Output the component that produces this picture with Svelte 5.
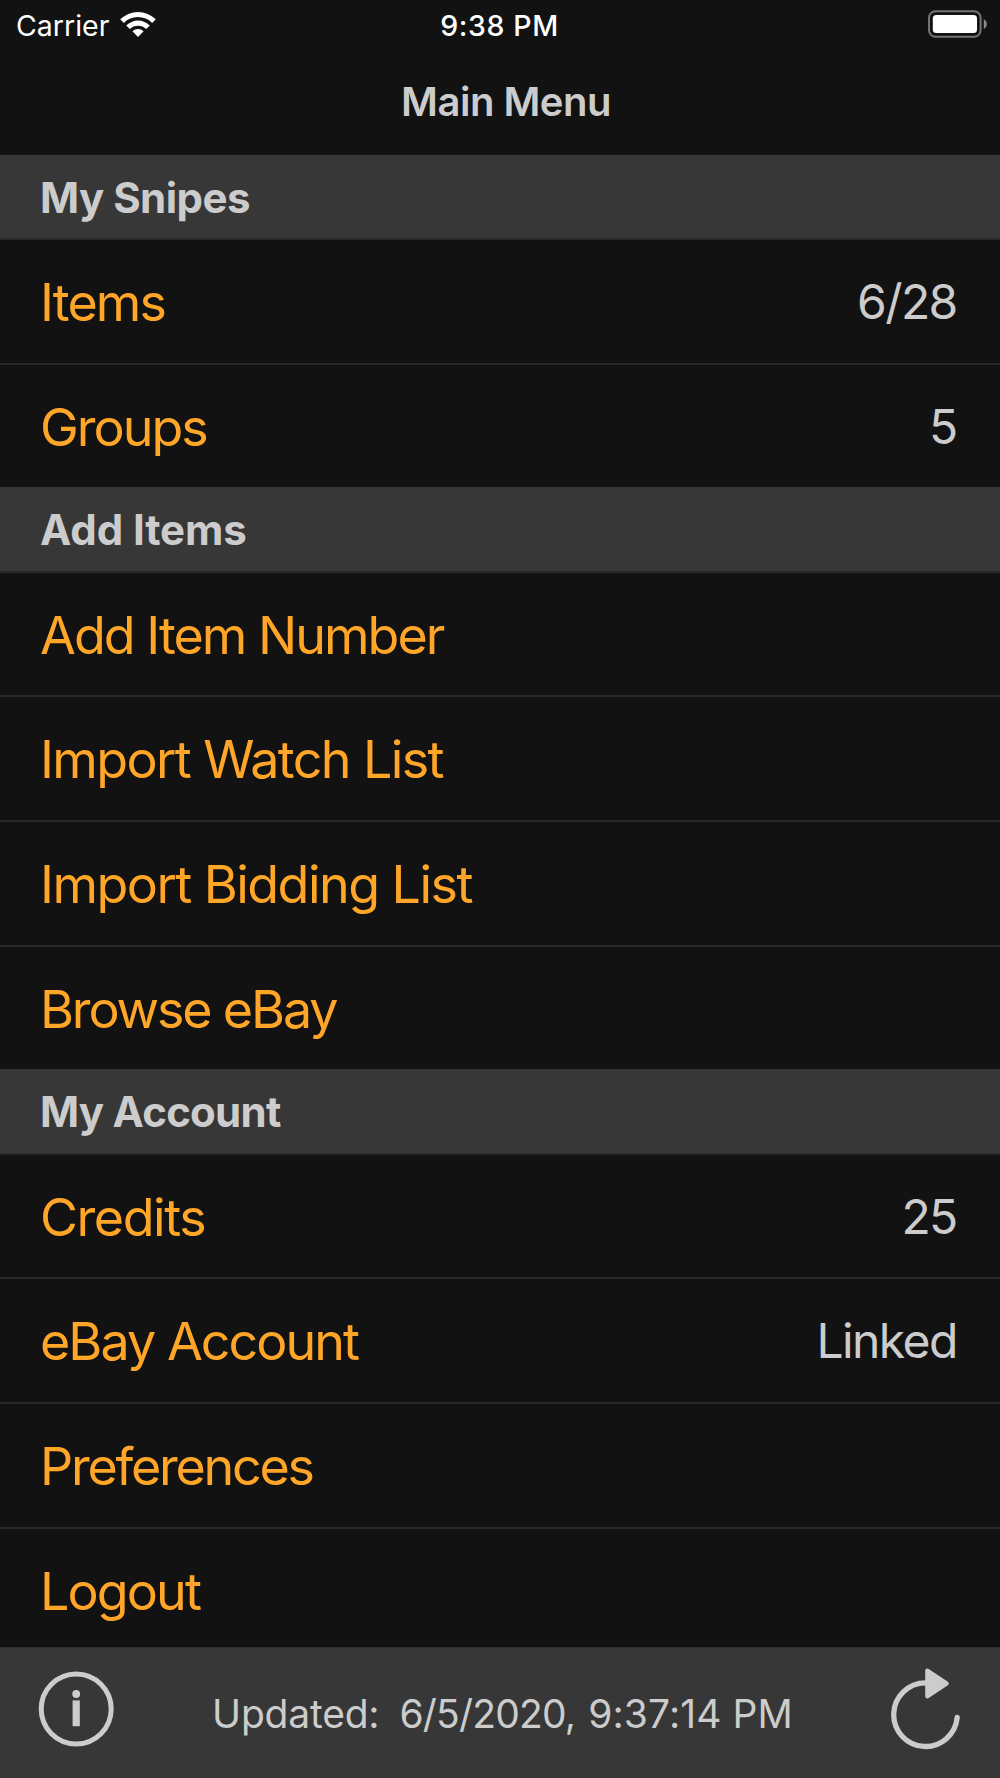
<script>
  // `tracking` is the letter spacing of a text, in pixels.
  const sections = [
    {
      title: 'My Snipes',
      tracking: -0.55,
      rows: [
        { label: 'Items', tracking: -1.9, detail: '6/28' },
        { label: 'Groups', tracking: -2, detail: '5' },
      ],
    },
    {
      title: 'Add Items',
      tracking: -0.1,
      rows: [
        { label: 'Add Item Number', tracking: -1.98 },
        { label: 'Import Watch List', tracking: -1.62 },
        { label: 'Import Bidding List', tracking: -1.54 },
        { label: 'Browse eBay', tracking: -2.15 },
      ],
    },
    {
      title: 'My Account',
      tracking: -0.75,
      rows: [
        { label: 'Credits', tracking: -1.45, detail: '25' },
        { label: 'eBay Account', tracking: -1.95, detail: 'Linked' },
        { label: 'Preferences', tracking: -2.25 },
        { label: 'Logout', tracking: -1.9 },
      ],
    },
  ];
</script>

<div class="screen">
  <div class="status">
    <div class="carrier">
      <span>Carrier</span>
      <svg class="wifi" width="38" height="28" viewBox="0 0 38 28">
        <path d="M1.2 9.3 A25.4 25.4 0 0 1 36.8 9.3 L33.2 12.9 A20.3 20.3 0 0 0 4.8 12.9 Z" />
        <path d="M7.2 15.5 A16.7 16.7 0 0 1 30.8 15.5 L27.2 19 A11.7 11.7 0 0 0 10.8 19 Z" />
        <path d="M13.4 21.3 A8 8 0 0 1 24.6 21.3 L19 27 Z" />
      </svg>
    </div>
    <span class="time">9:38 PM</span>
    <svg class="battery" width="60" height="28" viewBox="0 0 60 28">
      <rect x="2" y="1.2" width="51.6" height="25.6" rx="6.5" fill="none" stroke="#747474" stroke-width="2" />
      <rect x="5.8" y="5" width="44.2" height="18" rx="3.5" fill="#fff" />
      <path d="M56.8 9.2 A5.5 5.5 0 0 1 56.8 19 Z" fill="#8c8c8c" />
    </svg>
  </div>

  <header><h1>Main Menu</h1></header>

  <main>
    {#each sections as section}
      <section>
        <h2 style:letter-spacing="{section.tracking}px">{section.title}</h2>
        <ul>
          {#each section.rows as row}
            <li>
              <span class="label" style:letter-spacing="{row.tracking}px">{row.label}</span>
              {#if row.detail}<span class="detail">{row.detail}</span>{/if}
            </li>
          {/each}
        </ul>
      </section>
    {/each}
  </main>

  <footer>
    <svg class="info" width="76" height="76" viewBox="0 0 76 76">
      <circle cx="38.2" cy="38" r="35" fill="none" stroke="#ccc" stroke-width="5" />
      <circle cx="38.2" cy="23" r="3.9" fill="#ccc" />
      <rect x="34.6" y="29.4" width="7.2" height="25.8" fill="#ccc" />
    </svg>
    <p>
      <span>Updated:</span>
      <span class="date">6/5/2020,</span>
      <span class="clock">9:37:14 PM</span>
    </p>
    <svg class="refresh" width="70" height="84" viewBox="0 0 70 84">
      <path d="M34.5 15.9 A31.8 31.8 0 1 0 66.2 50.3" fill="none" stroke="#ccc" stroke-width="5.3" stroke-linecap="round" />
      <path d="M36.2 3.5 L55.8 16.5 L36.2 29.5 Z" fill="#ccc" stroke="#ccc" stroke-width="4" stroke-linejoin="round" />
    </svg>
  </footer>
</div>

<style>
  :global(body) {
    background: #121212;
  }
  .screen {
    width: 1000px;
    height: 1778px;
    display: flex;
    flex-direction: column;
    overflow: hidden;
    background: #121212;
    color: #ccc;
    font-family: Inter, 'Liberation Sans', sans-serif;
    white-space: nowrap;
  }
  .status {
    display: grid;
    grid-template-columns: 1fr auto 1fr;
    align-items: center;
    height: 51px;
    flex: none;
    padding: 0 13px 0 16px;
    color: #fff;
    font-size: 28.5px;
    line-height: 50px;
  }
  .carrier {
    display: flex;
    align-items: center;
    gap: 10px;
  }
  .wifi {
    fill: #fff;
    margin-bottom: 4px;
  }
  .time {
    margin-right: 4px;
    font-weight: 500;
    letter-spacing: 0.6px;
  }
  .battery {
    justify-self: end;
    margin-bottom: 3px;
  }
  header {
    height: 103.7px;
    flex: none;
    text-align: center;
  }
  h1 {
    margin: 0;
    padding-left: 12px;
    font-size: 40px;
    font-weight: 600;
    letter-spacing: -0.5px;
    line-height: 102px;
  }
  main {
    flex: 1;
    min-height: 0;
    overflow: hidden;
  }
  h2 {
    box-sizing: border-box;
    height: 85.4px;
    margin: 0;
    padding-left: 40px;
    border-bottom: 2px solid #282828;
    background: #373737;
    font-size: 42px;
    font-weight: 700;
    line-height: 85px;
  }
  ul {
    margin: 0;
    padding: 0;
    list-style: none;
  }
  li {
    box-sizing: border-box;
    display: flex;
    justify-content: space-between;
    height: 124.7px;
    padding: 0 43.3px 0 40px;
    border-bottom: 2px solid #282828;
  }
  li:last-child {
    height: 122.5px;
    border-bottom: 0;
  }
  .label {
    color: #ffa629;
    font-size: 52px;
    line-height: 126px;
  }
  .detail {
    font-size: 48px;
    letter-spacing: -1.6px;
    line-height: 124px;
  }
  footer {
    box-sizing: border-box;
    display: flex;
    justify-content: space-between;
    height: 130.7px;
    flex: none;
    padding: 0 39px 0 38px;
    border-top: 1px solid #303030;
    background: #373737;
  }
  .info {
    margin-top: 22.5px;
  }
  p {
    display: flex;
    margin: 0;
    font-size: 39px;
    letter-spacing: -0.2px;
    line-height: 131px;
  }
  .date {
    margin-left: 20px;
    letter-spacing: -0.8px;
  }
  .clock {
    margin-left: 13px;
    letter-spacing: 0.1px;
  }
  .refresh {
    margin-top: 19px;
  }
</style>
